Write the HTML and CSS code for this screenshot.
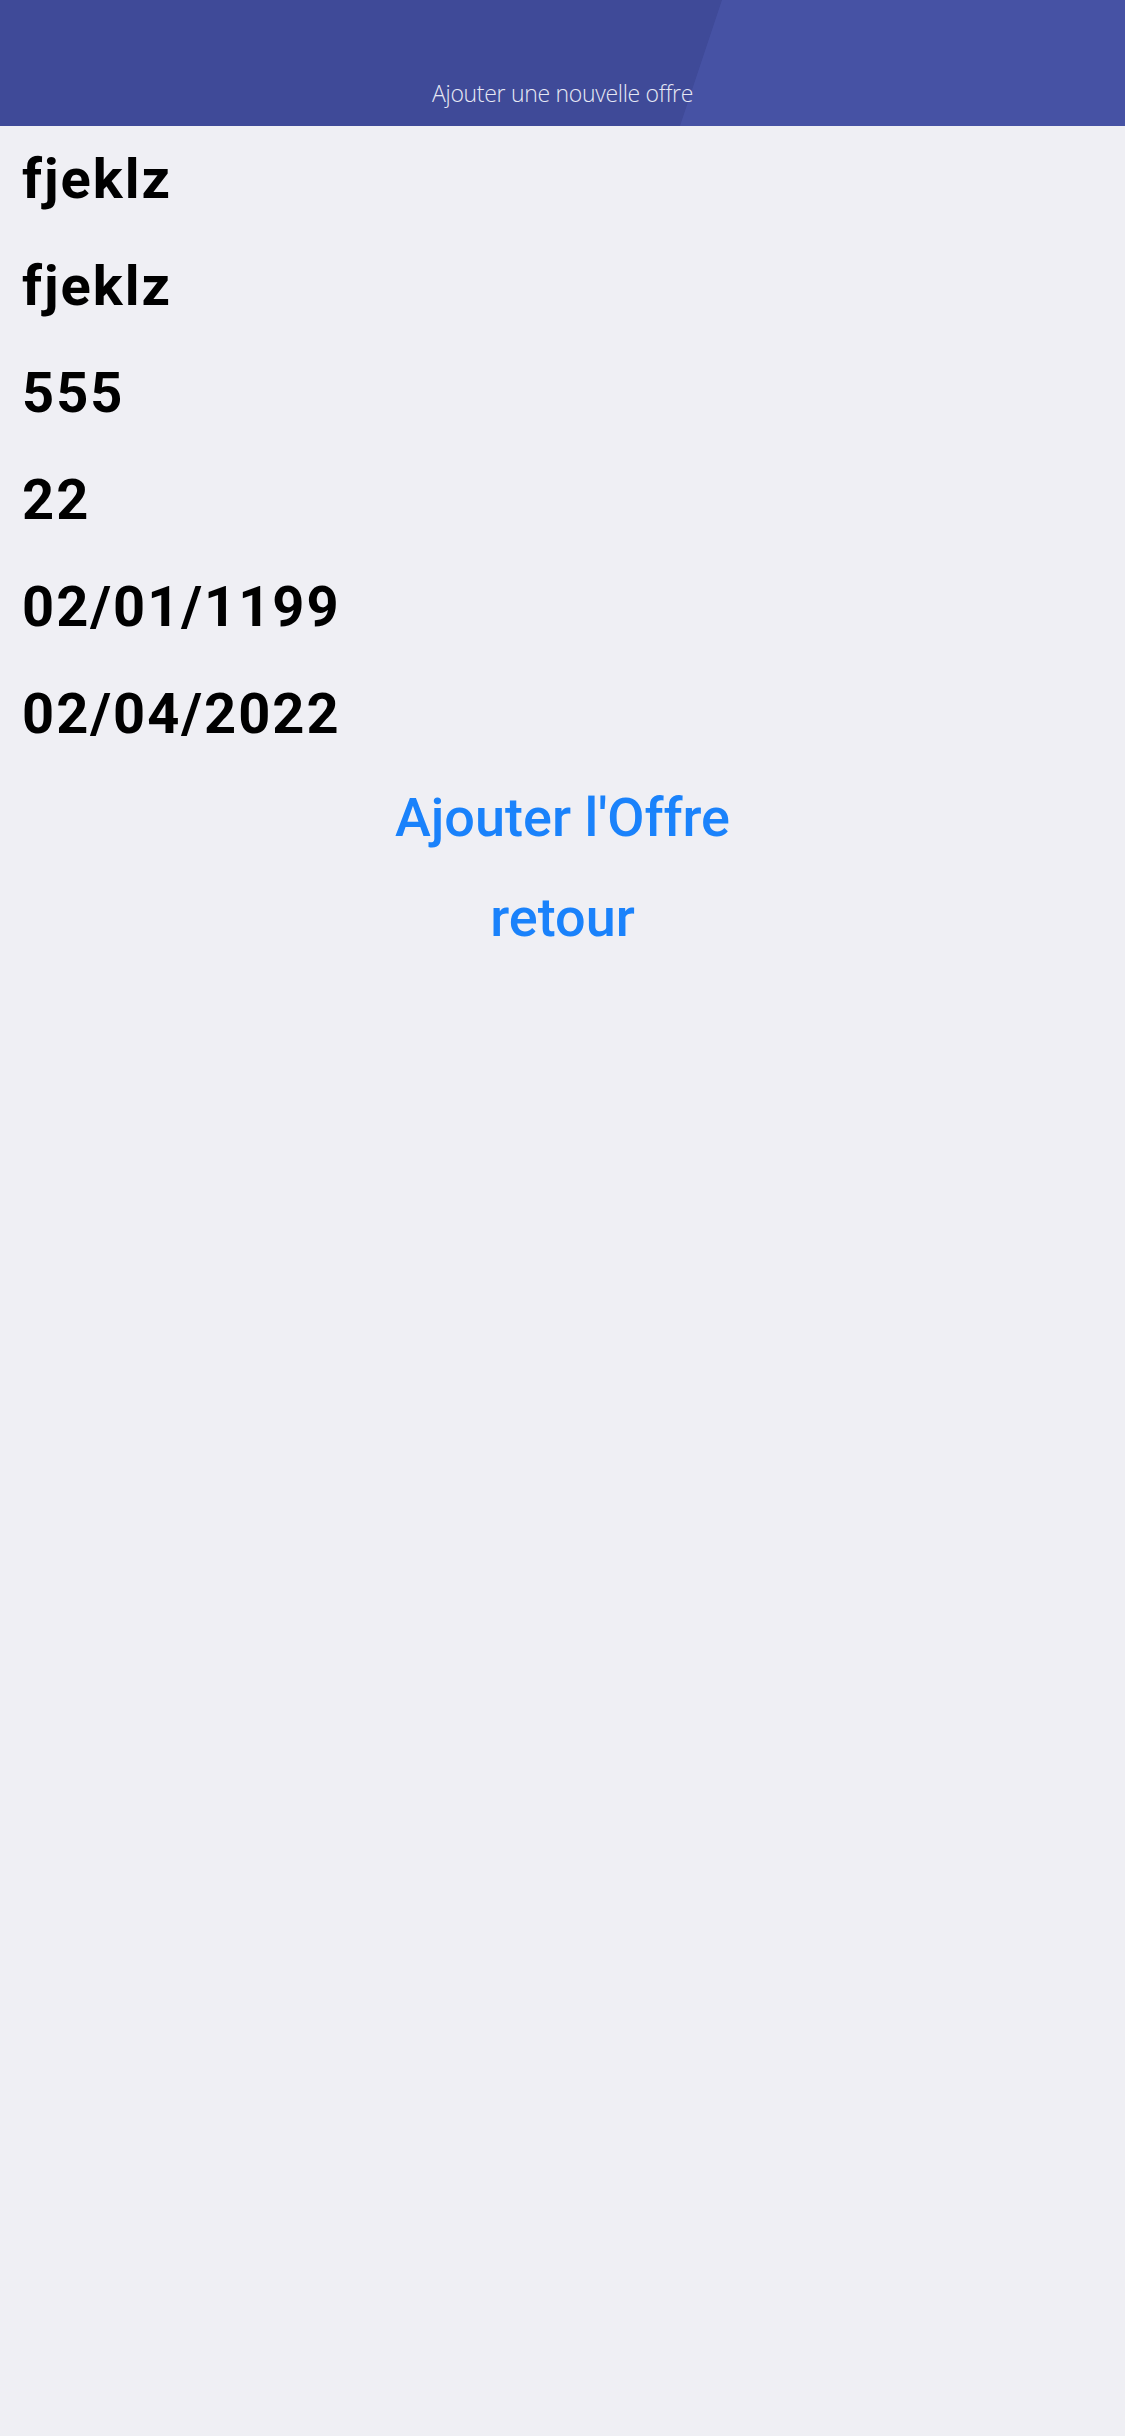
FILE: index.html
```html
<!DOCTYPE html>
<html lang="fr">
<head>
<meta charset="utf-8">
<title>Ajouter une nouvelle offre</title>
<link rel="stylesheet" href="styles.css">
</head>
<body>
<header class="topbar">
  <div class="topbar-shade"></div>
  <h1 class="topbar-title">Ajouter une nouvelle offre</h1>
</header>
<main class="content">
  <ul class="fields">
    <li class="field">fjeklz</li>
    <li class="field">fjeklz</li>
    <li class="field">555</li>
    <li class="field">22</li>
    <li class="field">02/01/1199</li>
    <li class="field">02/04/2022</li>
  </ul>
  <div class="actions">
    <button class="link-btn">Ajouter l'Offre</button>
    <button class="link-btn">retour</button>
  </div>
</main>
</body>
</html>
```
FILE: styles.css
```css
* { box-sizing: border-box; }
html, body {
  margin: 0;
  padding: 0;
  background: #efeff4;
  height: 100%;
}
body {
  font-family: Roboto, "Liberation Sans", sans-serif;
  color: #000;
}
.topbar {
  position: relative;
  height: 126px;
  background: #4652a4;
  overflow: hidden;
  display: flex;
  align-items: flex-end;
  justify-content: center;
}
.topbar-shade {
  position: absolute;
  inset: 0;
  background: #3f4a98;
  clip-path: polygon(0 0, 722px 0, 680px 100%, 0 100%);
}
.topbar-title {
  position: relative;
  margin: 0 0 18px 0;
  font-family: "Open Sans", sans-serif;
  font-weight: 300;
  font-size: 23px;
  line-height: 30px;
  color: #e6e8f4;
  letter-spacing: -0.3px;
}
.content {
  display: flex;
  flex-direction: column;
}
.fields {
  list-style: none;
  margin: 0;
  padding: 0 0 0 22px;
}
.field {
  font-size: 56px;
  line-height: 107px;
  height: 107px;
  font-weight: 700;
  letter-spacing: 2px;
}
.actions {
  display: flex;
  flex-direction: column;
  align-items: center;
}
.link-btn {
  background: none;
  border: 0;
  padding: 0;
  font-family: Roboto, "Liberation Sans", sans-serif;
  font-weight: 500;
  font-size: 54px;
  line-height: 100px;
  height: 100px;
  color: #1a82fb;
}
```
